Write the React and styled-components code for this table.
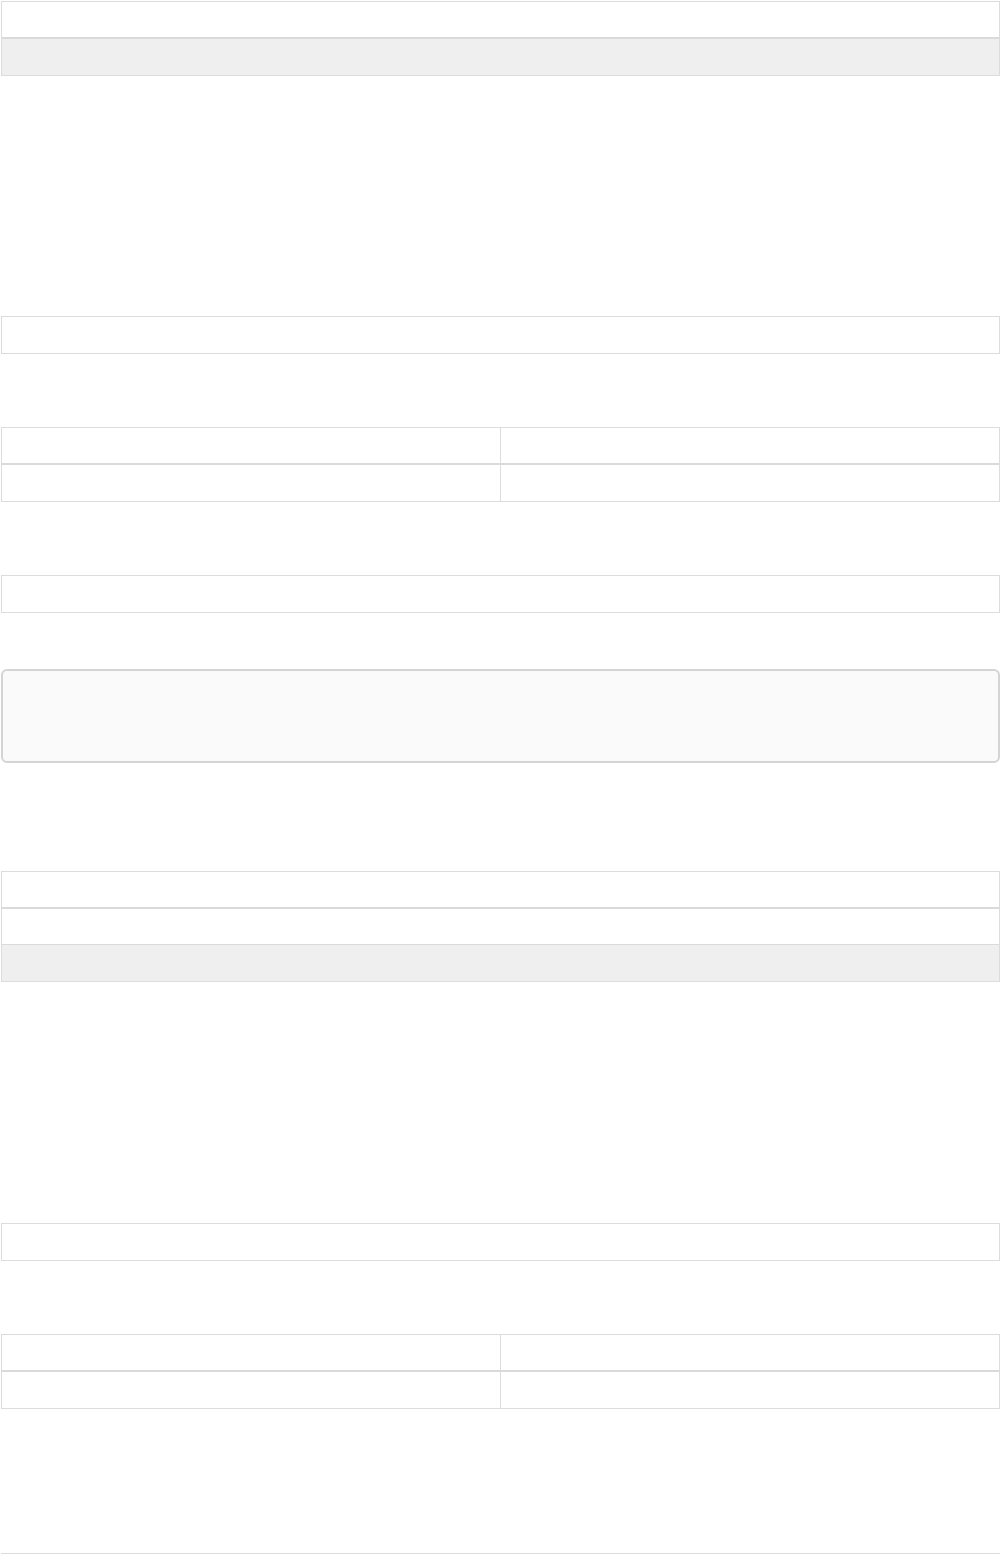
import React from 'react';
import styled, { createGlobalStyle } from 'styled-components';

const GlobalStyle = createGlobalStyle`
  html, body {
    margin: 0;
    padding: 0;
    background: #ffffff;
    font-family: "Liberation Sans", Arial, sans-serif;
  }
`;

const Page = styled.div`
  display: flex;
  flex-direction: column;
  padding-left: 1px;
  width: 999px;
  height: 1554px;
  overflow: hidden;

  & > * {
    flex-shrink: 0;
  }
`;

const Table = styled.div`
  display: flex;
  flex-direction: column;
  margin-top: ${(p) => p.$top}px;
  border: 1px solid #dcdcdc;
`;

const Row = styled.div`
  display: grid;
  flex-shrink: 0;
  grid-template-columns: ${(p) => (p.$split ? '498px 1fr' : '1fr')};
  height: ${(p) => p.$h}px;
  background: ${(p) => (p.$shade ? '#efefef' : '#ffffff')};
  border-bottom: ${(p) => p.$sep || 0}px solid #dadada;
`;

const Cell = styled.div`
  & + & {
    border-left: 1px solid #dcdcdc;
  }
`;

const Field = styled.div`
  margin-top: ${(p) => p.$top}px;
  height: 36px;
  border: 1px solid #dcdcdc;
  background: #ffffff;
`;

const Notice = styled.div`
  margin-top: ${(p) => p.$top}px;
  height: 90px;
  border: 2px solid #d4d4d4;
  border-radius: 6px;
  background: #fafafa;
`;

const Footer = styled.div`
  margin-top: ${(p) => p.$top}px;
  border-top: 1px solid #dcdcdc;
  height: 20px;
`;

const SplitRow = ({ h, sep }) => (
  <Row $split $h={h} $sep={sep}>
    <Cell />
    <Cell />
  </Row>
);

const App = () => (
  <>
    <GlobalStyle />
    <Page>
      <Table $top={1}>
        <Row $h={35} $sep={2} />
        <Row $h={36} $shade />
      </Table>

      <Field $top={240} />

      <Table $top={73}>
        <SplitRow h={35} sep={2} />
        <SplitRow h={36} />
      </Table>

      <Field $top={73} />

      <Notice $top={56} />

      <Table $top={108}>
        <Row $h={35} $sep={2} />
        <Row $h={35} $sep={1} />
        <Row $h={36} $shade />
      </Table>

      <Field $top={241} />

      <Table $top={73}>
        <SplitRow h={35} sep={2} />
        <SplitRow h={36} />
      </Table>

      <Footer $top={144} />
    </Page>
  </>
);

export default App;
